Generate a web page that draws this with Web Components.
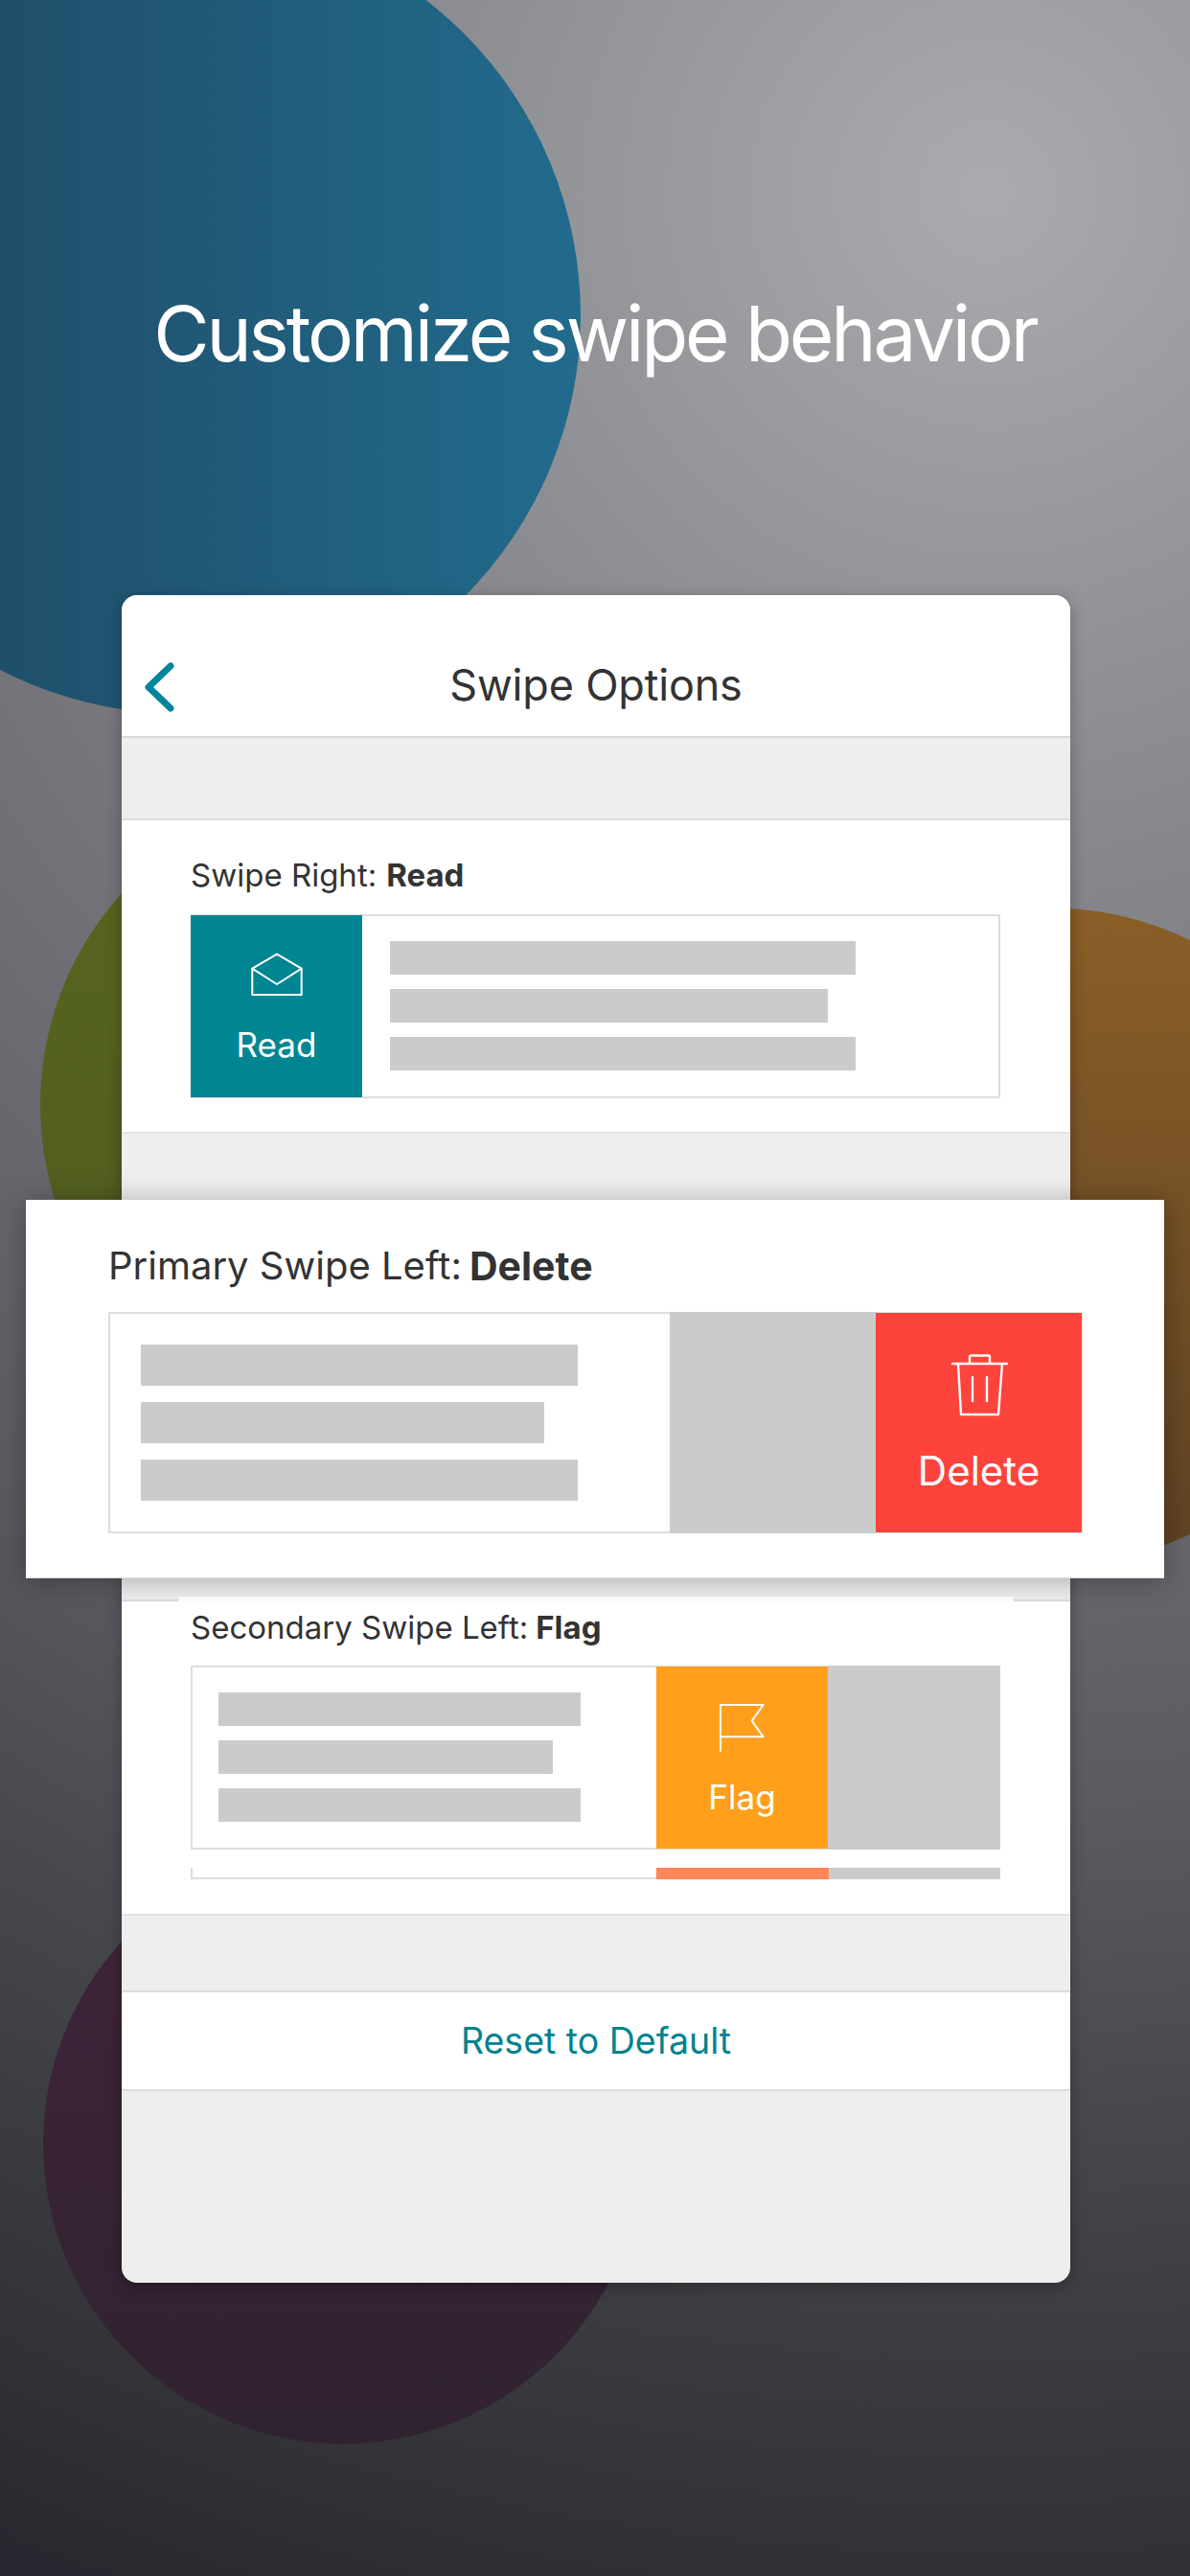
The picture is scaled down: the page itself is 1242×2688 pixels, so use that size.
<!DOCTYPE html>
<html>
<head>
<meta charset="utf-8">
<style>
	html, body { margin: 0; padding: 0; }
	body { width: 1242px; height: 2688px; overflow: hidden; font-family: "Inter", "Liberation Sans", sans-serif; }
</style>
</head>
<body>
<swipe-page>
	<swipe-card>
		<swipe-section slot="first" label="Swipe Right:" action="Read">
			<swipe-demo kind="read"></swipe-demo>
		</swipe-section>
		<swipe-panel slot="float" label="Primary Swipe Left:" action="Delete"></swipe-panel>
		<swipe-section slot="second" label="Secondary Swipe Left:" action="Flag" class="secondary">
			<swipe-demo kind="flag"></swipe-demo>
		</swipe-section>
	</swipe-card>
</swipe-page>

<script>
// ==========
// Constants.
// ==========

const ICONS = {
	read: `<svg width="56" height="46" viewBox="0 0 56 46" fill="none" stroke="#fff" stroke-width="2" stroke-linejoin="round" stroke-linecap="round"><path d="M2.3 16.7 L28 1.7 L53.7 16.7 V44 H2.3 Z"/><path d="M2.3 16.7 L28 33 L53.7 16.7"/></svg>`,
	flag: `<svg width="50" height="52" viewBox="0 0 50 52" fill="none" stroke="#fff" stroke-width="2" stroke-linejoin="round" stroke-linecap="round"><path d="M2 50 V2 H46.7 L34.7 18.7 L46.7 35.3 H2"/></svg>`,
	trash: `<svg width="60" height="66" viewBox="0 0 60 66" fill="none" stroke="#fff" stroke-width="2.4" stroke-linejoin="round" stroke-linecap="round"><path d="M2 10 H59"/><path d="M20 10 V3 Q20 1.5 21.5 1.5 H39.5 Q41 1.5 41 3 V10"/><path d="M8 10 L11 63 H50 L54 10"/><path d="M23 24 V49"/><path d="M38 24 V49"/></svg>`,
};

// ===========
// Background.
// ===========

class SwipePage extends HTMLElement {
	constructor() {
		super();
		this.attachShadow({ mode: 'open' });
		this.shadowRoot.innerHTML = `
			<style>
				:host {
					display: block;
					position: relative;
					overflow: hidden;
					width: 1242px;
					height: 2688px;
					background: radial-gradient(circle at 1030px 200px,
						#aaabaf 0, #98999d 350px, #85868c 730px, #737479 1150px,
						#5a5b60 1690px, #48494e 2000px, #3b3c40 2250px, #27262e 2700px);
				}
				.dot { position: absolute; border-radius: 50%; }
				.blue { left: -226px; top: -87px; width: 832px; height: 832px; background: linear-gradient(90deg, #1f4f6a 226px, #226b8d 100%); }
				.green { left: 42px; top: 823px; width: 660px; height: 660px; background: linear-gradient(180deg, #58661f, #4f5b20); }
				.orange { left: 749px; top: 947px; width: 688px; height: 688px; background: linear-gradient(180deg, #8a5e27, #5d4224); }
				.purple { left: 45px; top: 1924px; width: 626px; height: 626px; background: linear-gradient(180deg, #40243a, #302330); }
				h1 {
					position: relative;
					display: flex;
					align-items: center;
					justify-content: center;
					height: 621px;
					margin: 0;
					padding-top: 75px;
					box-sizing: border-box;
					color: #fff;
					font: 400 80px/96px "Inter", "Liberation Sans", sans-serif;
					letter-spacing: -3.15px;
				}
				.stage { position: relative; padding: 0 125px 0 127px; }
			</style>
			<div class="dot blue"></div>
			<div class="dot green"></div>
			<div class="dot orange"></div>
			<div class="dot purple"></div>
			<h1>Customize swipe behavior</h1>
			<div class="stage"><slot></slot></div>
		`;
	}
}

// =====
// Card.
// =====

class SwipeCard extends HTMLElement {
	constructor() {
		super();
		this.attachShadow({ mode: 'open' });
		this.shadowRoot.innerHTML = `
			<style>
				:host {
					display: block;
					position: relative;
					width: 990px;
					height: 1761px;
					background: #eee;
					border-radius: 16px;
					box-shadow: 0 4px 16px rgba(0,0,0,.3);
				}
				header {
					display: flex;
					align-items: center;
					justify-content: center;
					position: relative;
					height: 149px;
					background: #fff;
					border-radius: 16px 16px 0 0;
					border-bottom: 2px solid #d9d9d9;
					box-sizing: border-box;
					padding-top: 40px;
					color: #333;
					font-size: 45px;
					letter-spacing: -.2px;
				}
				.back { position: absolute; left: 22px; top: 68px; }
				.gap-a { height: 84px; }
				.gap-b { height: 486px; }
				.gap-c { height: 78px; }
				.reset {
					display: flex;
					align-items: center;
					justify-content: center;
					height: 105px;
					background: #fff;
					border-top: 2px solid #ddd;
					border-bottom: 2px solid #ddd;
					box-sizing: border-box;
					color: #00838f;
					font-size: 37.5px;
				}
				.float { position: absolute; left: -100px; top: 631px; }
			</style>
			<header>
				<svg class="back" width="40" height="60" viewBox="0 0 40 60" fill="none" stroke="#00869a" stroke-width="7" stroke-linecap="round" stroke-linejoin="round"><path d="M29 6 L6 28 L29 50"/></svg>
				Swipe Options
			</header>
			<div class="gap-a"></div>
			<slot name="first"></slot>
			<div class="gap-b"></div>
			<slot name="second"></slot>
			<div class="gap-c"></div>
			<div class="reset">Reset to Default</div>
			<div class="float"><slot name="float"></slot></div>
		`;
	}
}

// ========
// Section.
// ========

class SwipeSection extends HTMLElement {
	constructor() {
		super();
		this.attachShadow({ mode: 'open' });
		const label = this.getAttribute('label');
		const action = this.getAttribute('action');
		this.shadowRoot.innerHTML = `
			<style>
				:host {
					display: block;
					position: relative;
					height: 329px;
					background: #fff;
					box-sizing: border-box;
					border-top: 2px solid #ddd;
					border-bottom: 2px solid #e3e3e3;
					padding: 0 73px 0 72px;
					color: #333;
				}
				:host(.secondary) { height: 330px; }
				:host(.secondary)::before {
					content: '';
					position: absolute;
					left: 59px;
					right: 59px;
					top: -5px;
					height: 5px;
					background: #fff;
				}
				.label {
					display: flex;
					align-items: center;
					gap: 10px;
					height: 98px;
					padding-top: 16px;
					box-sizing: border-box;
					font-size: 33px;
				}
				:host(.secondary) .label { height: 67px; padding-top: 0; padding-bottom: 14px; gap: 8px; }
				b { font-weight: 700; }
			</style>
			<div class="label"><span>${label}</span><b>${action}</b></div>
			<slot></slot>
		`;
	}
}

// ==========
// Demo rows.
// ==========

class SwipeDemo extends HTMLElement {
	constructor() {
		super();
		this.attachShadow({ mode: 'open' });
		const isRead = this.getAttribute('kind') === 'read';
		const bars = `
			<div class="bars">
				<i style="width:${isRead ? 486 : 378}px"></i>
				<i style="width:${isRead ? 457 : 349}px"></i>
				<i style="width:${isRead ? 486 : 378}px"></i>
			</div>
		`;
		this.shadowRoot.innerHTML = `
			<style>
				:host { display: block; }
				.row {
					display: flex;
					height: 192px;
					box-sizing: border-box;
					background: #fff;
					border: 2px solid #ddd;
				}
				.action {
					display: flex;
					flex-direction: column;
					align-items: center;
					flex: none;
					width: 179px;
					margin: -1px 0;
					box-sizing: border-box;
					color: #fff;
					font-size: 35px;
				}
				.read { background: #008592; margin-left: -2px; padding-top: 39px; }
				.flag { background: #ff9f1c; padding-top: 38px; }
				.read span { margin-top: 28px; line-height: 44px; }
				.flag span { margin-top: 24px; line-height: 44px; }
				.bars { display: flex; flex-direction: column; gap: 15px; padding-top: 26px; }
				.bars i { display: block; height: 35px; background: #cbcbcb; }
				.read ~ .bars { padding-left: 29px; }
				.fill { flex: 1; margin: -2px -2px -2px 0; background: #cbcbcb; }
				.flag-bars { width: 484px; flex: none; padding-left: 27px; box-sizing: border-box; }
				.sliver {
					display: flex;
					height: 12px;
					margin-top: 19px;
					background: #fff;
					border: 2px solid #ddd;
					border-top: 0;
					border-right: 0;
					box-sizing: border-box;
				}
				.sliver .a { width: 484px; }
				.sliver .b { width: 180px; margin-bottom: -2px; background: #ff8559; }
				.sliver .c { flex: 1; margin-bottom: -2px; background: #cbcbcb; }
			</style>
			${isRead ? `
				<div class="row">
					<div class="action read">${ICONS.read}<span>Read</span></div>
					${bars}
				</div>
			` : `
				<div class="row">
					<div class="flag-bars">${bars}</div>
					<div class="action flag">${ICONS.flag}<span>Flag</span></div>
					<div class="fill"></div>
				</div>
				<div class="sliver"><div class="a"></div><div class="b"></div><div class="c"></div></div>
			`}
		`;
	}
}

// ===============
// Floating panel.
// ===============

class SwipePanel extends HTMLElement {
	constructor() {
		super();
		this.attachShadow({ mode: 'open' });
		const label = this.getAttribute('label');
		const action = this.getAttribute('action');
		this.shadowRoot.innerHTML = `
			<style>
				:host {
					display: block;
					width: 1188px;
					height: 395px;
					box-sizing: border-box;
					padding: 0 85px 0 86px;
					background: #fff;
					border-bottom: 1px solid #ddd;
					box-shadow: 0 2px 26px rgba(0,0,0,.3);
					color: #333;
				}
				.label {
					display: flex;
					align-items: center;
					gap: 8px;
					height: 117px;
					padding-top: 20px;
					box-sizing: border-box;
					font-size: 40px;
				}
				b { font-weight: 700; font-size: 41px; }
				.row {
					display: flex;
					height: 231px;
					box-sizing: border-box;
					background: #fff;
					border: 2px solid #ddd;
				}
				.bars {
					display: flex;
					flex-direction: column;
					gap: 17px;
					flex: none;
					width: 584px;
					padding: 32px 0 0 32px;
					box-sizing: border-box;
				}
				.bars i { display: block; height: 43px; background: #cbcbcb; }
				.fill { width: 215px; margin: -2px 0; background: #cbcbcb; }
				.action {
					display: flex;
					flex-direction: column;
					align-items: center;
					flex: 1;
					margin: -1px -1px -1px 0;
					padding-top: 43px;
					background: #fc443c;
					color: #fff;
					font-size: 42px;
				}
				.action span { margin-top: 31px; line-height: 50px; }
			</style>
			<div class="label"><span>${label}</span><b>${action}</b></div>
			<div class="row">
				<div class="bars">
					<i style="width:456px"></i>
					<i style="width:421px"></i>
					<i style="width:456px"></i>
				</div>
				<div class="fill"></div>
				<div class="action">${ICONS.trash}<span>${action}</span></div>
			</div>
		`;
	}
}

// ================
// Define elements.
// ================

customElements.define('swipe-page', SwipePage);
customElements.define('swipe-card', SwipeCard);
customElements.define('swipe-section', SwipeSection);
customElements.define('swipe-demo', SwipeDemo);
customElements.define('swipe-panel', SwipePanel);
</script>
</body>
</html>
